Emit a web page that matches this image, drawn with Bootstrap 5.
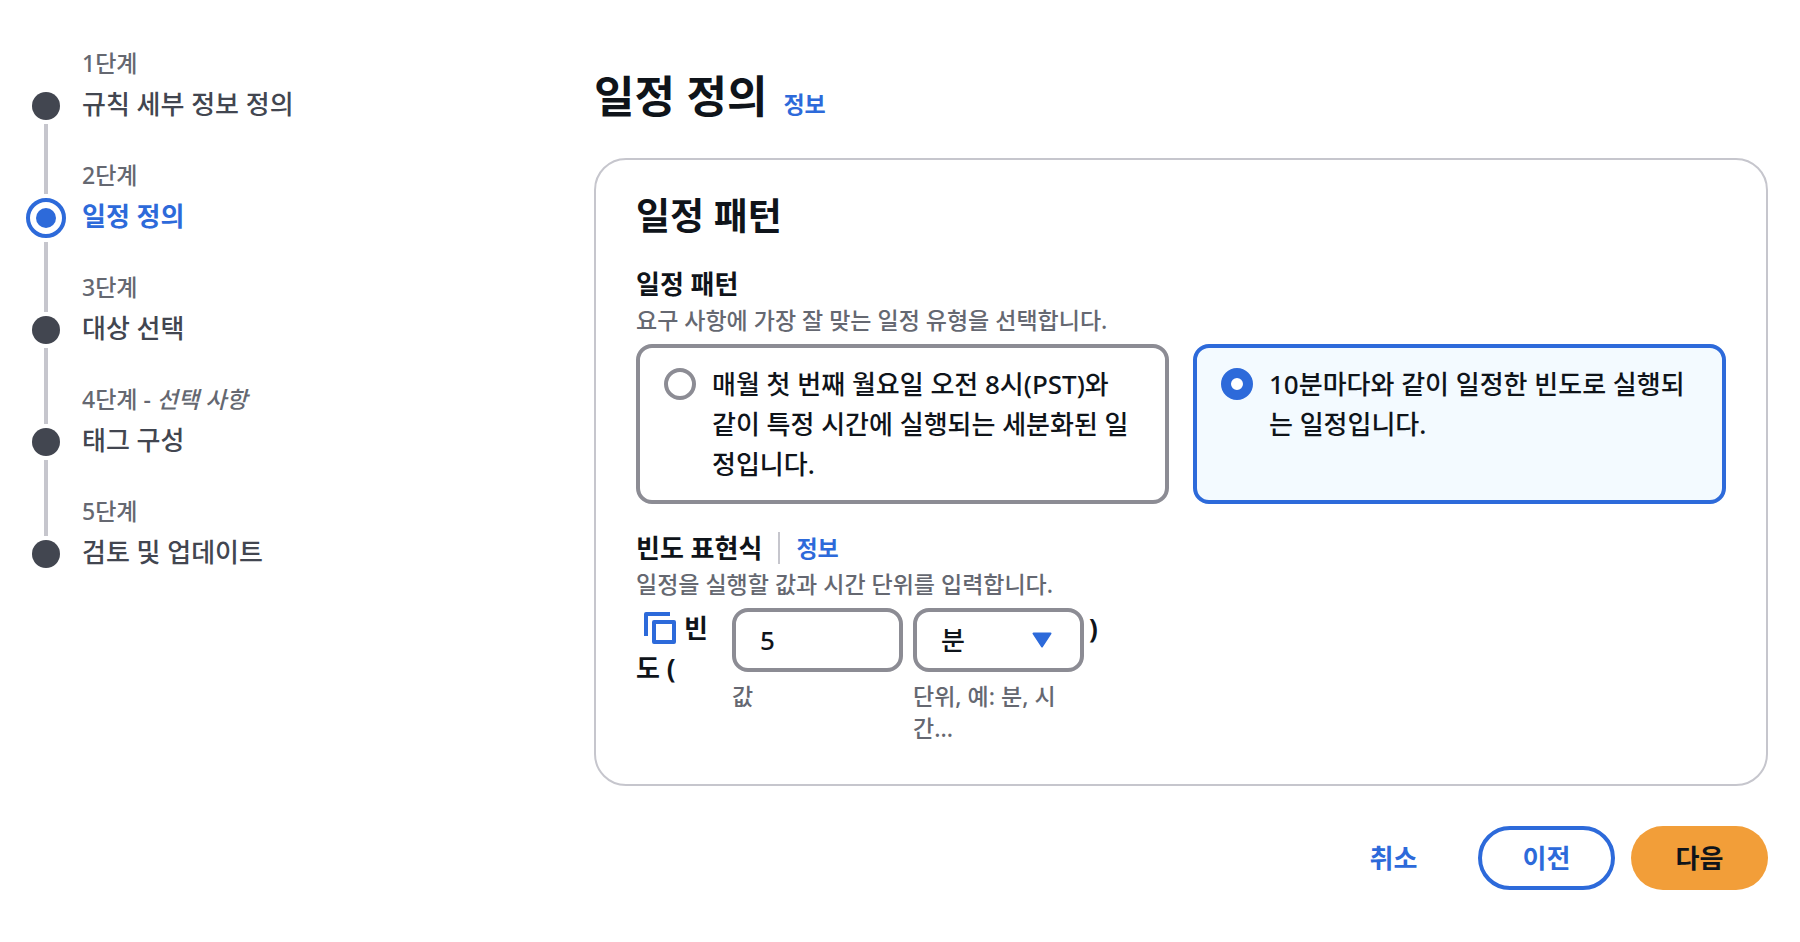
<!DOCTYPE html>
<html lang="ko">
<head>
<meta charset="utf-8">
<meta name="viewport" content="width=device-width, initial-scale=1">
<title>일정 정의</title>
<link href="https://cdn.jsdelivr.net/npm/bootstrap@5.3.0/dist/css/bootstrap.min.css" rel="stylesheet">
<style>
  :root { --ink: #0f141a; --muted: #656871; --step: #424650; --line: #c6c6cd; --control: #8c8c94; --accent: #2d6ada; }
  body { font-family: "Noto Sans", "Noto Sans CJK KR", sans-serif; font-size: 26px; line-height: 40px; font-weight: 500; color: var(--ink); background: #fff; }
  a { color: var(--accent); text-decoration: none; }
  .hint { font-size: 23px; line-height: 32px; color: var(--muted); }
  .info-link { font-size: 23px; line-height: 32px; font-weight: 600; }

  /* Wizard navigation */
  .wizard-nav { width: 33%; padding: 47px 24px 0 26px; }
  .wizard-step { min-height: 112px; color: var(--step); }
  .wizard-step .track { width: 40px; }
  .track .rail { width: 4px; background: var(--line); }
  .track .rail-in { height: 41px; }
  .track .dot { width: 28px; height: 28px; border-radius: 50%; background: var(--step); margin: 4px 0; }
  .wizard-step:first-child .rail-in, .wizard-step:last-child .rail-out { background: none; }
  .wizard-step.current .rail-in { height: 35px; }
  .wizard-step.current .dot { width: 40px; height: 40px; border: 4px solid var(--accent); padding: 6px; background: var(--accent) content-box; }
  .wizard-step.current .step-name { color: var(--accent); font-weight: 700; }
  .step-name { padding-top: 5px; }

  /* Main column */
  .wizard-main { padding: 67px 32px 48px 0; }
  .wizard-main h1 { font-size: 44px; line-height: 58px; font-weight: 700; }
  .panel { border: 2px solid var(--line); border-radius: 32px; margin-top: 33px; padding: 32px 40px 40px; }
  .panel h2 { font-size: 37px; line-height: 48px; font-weight: 700; }
  .field-title { font-size: 26px; line-height: 40px; font-weight: 700; }
  .tiles { gap: 24px; margin-top: 8px; }
  .tile { flex: 1 1 0; min-height: 160px; border: 4px solid var(--control); border-radius: 16px; padding: 16px 28px 16px 24px; gap: 16px; cursor: pointer; }
  .tile:has(input:checked) { border-color: var(--accent); background: #f3faff; }
  .tile .form-check-input { width: 32px; height: 32px; margin: 4px 0 0; border: 4px solid var(--control); }
  .tile .form-check-input:checked { border: 10px solid var(--accent); background: #fff; }
  .divider { width: 2px; height: 32px; background: var(--line); margin: 0 16px; }

  /* Rate expression row */
  .expression { margin-top: 8px; }
  .expression-label { width: 80px; margin-right: 16px; font-weight: 700; }
  .copy-btn { padding: 0; margin: 4px 8px; width: 32px; height: 32px; line-height: 0; vertical-align: top; border: 0; }
  .copy-btn svg { display: block; }
  .expression-field { width: 171px; margin-right: 10px; }
  .expression-field:has(select) { margin-right: 5px; }
  .expression-field .form-control, .expression-field .form-select {
    height: 64px; border: 4px solid var(--control); border-radius: 16px; padding: 8px 24px; font-size: 26px; line-height: 40px; font-weight: 500; color: var(--ink);
  }
  .expression-field .form-select {
    background-image: url("data:image/svg+xml,%3Csvg xmlns='http://www.w3.org/2000/svg' viewBox='0 0 20 16'%3E%3Cpath d='M1.500 1.500h17L10 14.500z' fill='%232d6ada' stroke='%232d6ada' stroke-width='2' stroke-linejoin='round'/%3E%3C/svg%3E");
    background-size: 20px 16px; background-position: right 28px center;
  }
  .expression-field .hint { margin-top: 8px; }

  .actions { margin-top: 40px; gap: 16px; }
  .action { min-width: 137px; height: 64px; padding: 8px 24px; border: 4px solid transparent; border-radius: 32px; font-size: 26px; line-height: 40px; font-weight: 700; color: var(--accent); }
  .action-outline { border-color: var(--accent); }
  .action-primary { background: #f29e39; color: var(--ink); }
</style>
</head>
<body>
<div class="d-flex align-items-start">
  <nav class="wizard-nav flex-shrink-0" aria-label="단계">
    <ol class="list-unstyled mb-0">
      <li class="wizard-step d-flex gap-3">
        <div class="track d-flex flex-column align-items-center"><span class="rail rail-in"></span><span class="dot"></span><span class="rail rail-out flex-grow-1"></span></div>
        <div><div class="hint">1단계</div><div class="step-name">규칙 세부 정보 정의</div></div>
      </li>
      <li class="wizard-step current d-flex gap-3" aria-current="step">
        <div class="track d-flex flex-column align-items-center"><span class="rail rail-in"></span><span class="dot"></span><span class="rail rail-out flex-grow-1"></span></div>
        <div><div class="hint">2단계</div><div class="step-name">일정 정의</div></div>
      </li>
      <li class="wizard-step d-flex gap-3">
        <div class="track d-flex flex-column align-items-center"><span class="rail rail-in"></span><span class="dot"></span><span class="rail rail-out flex-grow-1"></span></div>
        <div><div class="hint">3단계</div><div class="step-name">대상 선택</div></div>
      </li>
      <li class="wizard-step d-flex gap-3">
        <div class="track d-flex flex-column align-items-center"><span class="rail rail-in"></span><span class="dot"></span><span class="rail rail-out flex-grow-1"></span></div>
        <div><div class="hint">4단계 - <em>선택 사항</em></div><div class="step-name">태그 구성</div></div>
      </li>
      <li class="wizard-step d-flex gap-3">
        <div class="track d-flex flex-column align-items-center"><span class="rail rail-in"></span><span class="dot"></span><span class="rail rail-out flex-grow-1"></span></div>
        <div><div class="hint">5단계</div><div class="step-name">검토 및 업데이트</div></div>
      </li>
    </ol>
  </nav>

  <main class="wizard-main flex-grow-1">
    <form>
      <div class="d-flex align-items-baseline gap-3">
        <h1 class="mb-0">일정 정의</h1>
        <a href="#" class="info-link">정보</a>
      </div>

      <section class="panel">
        <h2 class="mb-0">일정 패턴</h2>

        <fieldset class="mt-4">
          <legend class="field-title mb-0">일정 패턴</legend>
          <div class="hint">요구 사항에 가장 잘 맞는 일정 유형을 선택합니다.</div>
          <div class="tiles d-flex">
            <label class="tile d-flex align-items-start" for="pattern-cron">
              <input class="form-check-input flex-shrink-0" type="radio" name="pattern" id="pattern-cron">
              <span>매월 첫 번째 월요일 오전 8시(PST)와 같이 특정 시간에 실행되는 세분화된 일정입니다.</span>
            </label>
            <label class="tile d-flex align-items-start" for="pattern-rate">
              <input class="form-check-input flex-shrink-0" type="radio" name="pattern" id="pattern-rate" checked>
              <span>10분마다와 같이 일정한 빈도로 실행되는 일정입니다.</span>
            </label>
          </div>
        </fieldset>

        <div class="mt-4">
          <div class="d-flex align-items-center">
            <span class="field-title">빈도 표현식</span>
            <span class="divider"></span>
            <a href="#" class="info-link">정보</a>
          </div>
          <div class="hint">일정을 실행할 값과 시간 단위를 입력합니다.</div>
          <div class="expression d-flex align-items-start">
            <div class="expression-label"><button type="button" class="btn copy-btn" aria-label="복사"><svg width="32" height="32" viewBox="0 0 32 32" fill="none" stroke="#2d6ada" stroke-width="4" stroke-linejoin="round"><path d="M2 24V2h24" /><rect x="10" y="10" width="20" height="20"/></svg></button>빈도 (</div>
            <div class="expression-field">
              <input class="form-control" type="text" id="rate-value" value="5">
              <label class="hint d-block" for="rate-value">값</label>
            </div>
            <div class="expression-field">
              <select class="form-select" id="rate-unit"><option>분</option><option>시간</option><option>일</option></select>
              <label class="hint d-block" for="rate-unit">단위, 예: 분, 시간...</label>
            </div>
            <div class="fw-bold">)</div>
          </div>
        </div>
      </section>

      <div class="actions d-flex justify-content-end">
        <button type="button" class="btn action">취소</button>
        <button type="button" class="btn action action-outline">이전</button>
        <button type="submit" class="btn action action-primary">다음</button>
      </div>
    </form>
  </main>
</div>
<script src="https://cdn.jsdelivr.net/npm/bootstrap@5.3.0/dist/js/bootstrap.bundle.min.js"></script>
</body>
</html>
